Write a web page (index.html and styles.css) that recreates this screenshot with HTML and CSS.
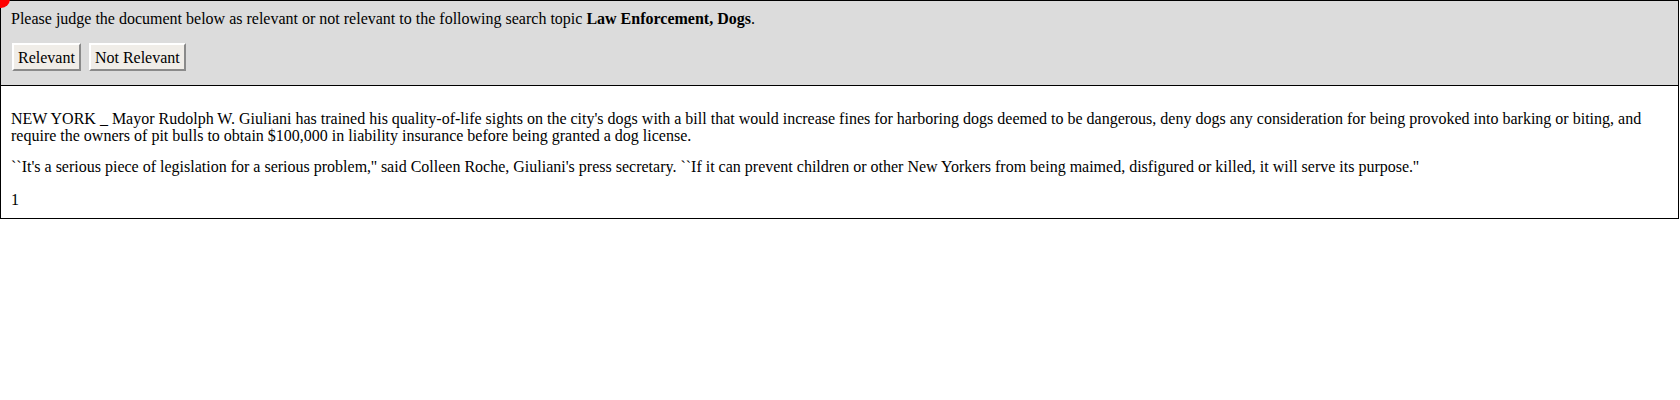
FILE: index.html
```html
<!DOCTYPE html>
<html>
<head>
<meta charset="utf-8">
<link rel="stylesheet" href="styles.css">
</head>
<body>
<div class="dot"></div>
<div class="judge">
  <div class="prompt">Please judge the document below as relevant or not relevant to the following search topic <b>Law Enforcement, Dogs</b>.</div>
  <div class="buttons">
    <button class="btn">Relevant</button>
    <button class="btn">Not Relevant</button>
  </div>
</div>
<div class="doc">
  <p>NEW YORK _ Mayor Rudolph W. Giuliani has trained his quality-of-life sights on the city's dogs with a bill that would increase fines for harboring dogs deemed to be dangerous, deny dogs any consideration for being provoked into barking or biting, and require the owners of pit bulls to obtain $100,000 in liability insurance before being granted a dog license.</p>
  <p>``It's a serious piece of legislation for a serious problem,'' said Colleen Roche, Giuliani's press secretary. ``If it can prevent children or other New Yorkers from being maimed, disfigured or killed, it will serve its purpose.''</p>
  <p class="num">1</p>
</div>
</body>
</html>
```

FILE: styles.css
```css
html, body {
  margin: 0;
  padding: 0;
  background: #fff;
}
body {
  font-family: "Liberation Serif", "Times New Roman", serif;
  font-size: 16px;
  line-height: 17px;
  color: #000;
  margin-right: 1px;
}
.dot {
  position: absolute;
  left: -8px;
  top: -10px;
  width: 18px;
  height: 18px;
  border-radius: 50%;
  background: #ff0000;
}
.judge {
  background: #dcdcdc;
  border: 1px solid #000;
  padding: 9px 10px 14px 10px;
}
.prompt {
  height: 18px;
}
.buttons {
  display: flex;
  gap: 8px;
  margin-top: 15px;
  padding-left: 1px;
}
.btn {
  font-family: "Liberation Serif", "Times New Roman", serif;
  font-size: 16px;
  line-height: 18px;
  color: #000;
  background: #f0ede8;
  border: 2px solid;
  border-color: #ffffff #8a8a8a #8a8a8a #ffffff;
  padding: 4px 4px;
  height: 28px;
  margin: 0;
}
.doc {
  border: 1px solid #000;
  border-top: none;
  padding: 8px 10px 10px 10px;
}
.doc p {
  margin: 14px 0 0 0;
}
.doc p:first-child {
  margin-top: 16px;
}
.doc p.num {
  margin-top: 16px;
}
```
